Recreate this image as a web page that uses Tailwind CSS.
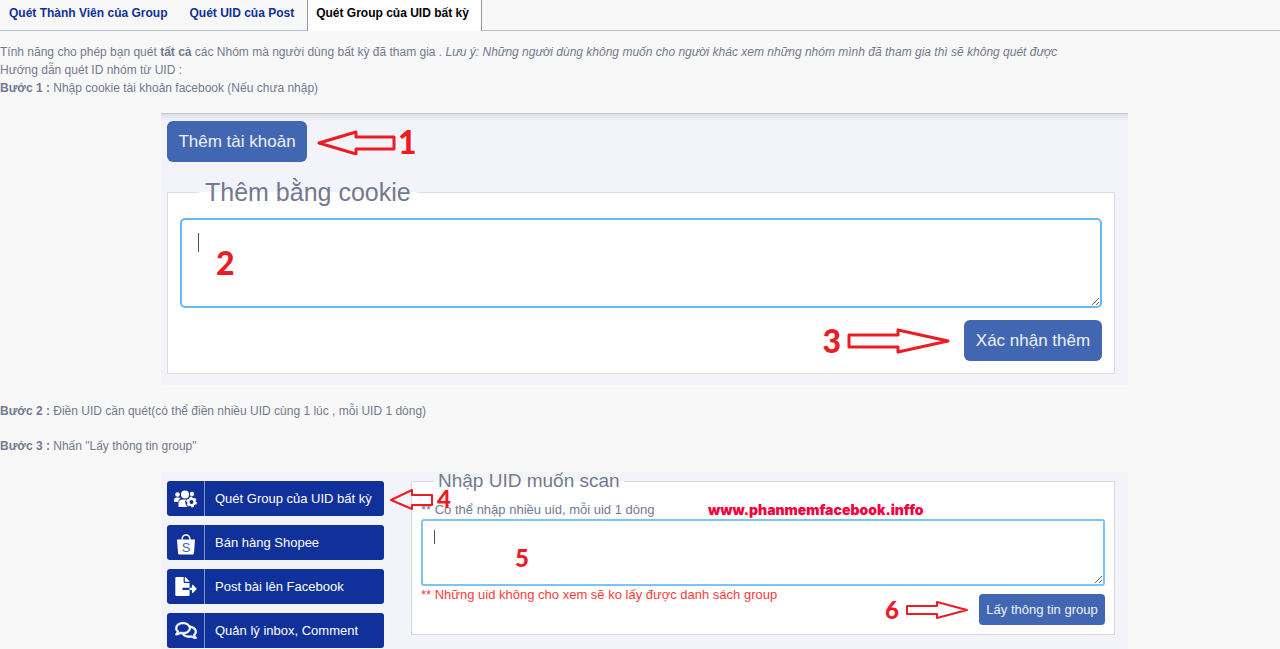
<!DOCTYPE html>
<html lang="vi">

<head>
    <meta charset="UTF-8" />
    <meta name="viewport" content="width=device-width, initial-scale=1.0" />
    <title>Quét Group của UID bất kỳ</title>
    <script src="https://cdn.jsdelivr.net/npm/@tailwindcss/browser@4"></script>
</head>

<body class="bg-[#f8f8f8] font-['Liberation_Sans',Arial,sans-serif] text-[12px] leading-[18px] text-[#737990]">
    <!-- Tabs -->
    <nav class="flex border-b border-[#b9c2cd] font-bold text-[#10309a]">
        <a href="#" class="border-x border-transparent pt-1 pr-3 pb-2 pl-2">Quét Thành Viên của Group</a>
        <a href="#" class="border-x border-transparent pt-1 pr-3 pb-2 pl-2">Quét UID của Post</a>
        <a href="#" class="-mb-px border-x border-[#8d98a8] bg-white pt-1 pr-3 pb-2 pl-2 text-black">Quét Group của UID bất kỳ</a>
    </nav>

    <main class="pb-4">
        <div class="mt-3">
            <p>Tính năng cho phép bạn quét <b>tất cả</b> các Nhóm mà người dùng bất kỳ đã tham gia . <i>Lưu ý: Những người dùng không muốn cho người khác xem những nhóm mình đã tham gia thì sẽ không quét được</i></p>
            <p>Hướng dẫn quét ID nhóm từ UID :</p>
            <p><b>Bước 1 :</b> Nhập cookie tài khoản facebook (Nếu chưa nhập)</p>
        </div>

        <!-- Add account by cookie -->
        <section class="mt-4 ml-[161px] mr-[152px] bg-[#f3f4fa] bg-linear-to-b from-[#dfe0e6] to-[#f3f4fa] to-[8px] border-t border-[#c3c4ca] pt-[7px] pr-[13px] pb-[11px] pl-[6px]">
            <div class="flex items-center">
                <button type="button" class="h-[41px] w-[140px] rounded-md bg-[#4267b2] text-[17px] text-[#eef1f8]">Thêm tài khoản</button>
                <svg class="ml-[10px] h-[26px] w-[80px]" viewBox="0 0 80 26" fill="none" stroke="#ed1c24" stroke-width="3" stroke-linejoin="round">
                    <path d="M2 14 L39 3 V8 H77 V20 H39 V25 Z" />
                </svg>
                <span class="ml-px font-[Lato,sans-serif] text-[32px] leading-[38px] font-black text-[#ed1c24]">1</span>
            </div>
            <fieldset class="mt-[14px] min-w-0 border border-[#dcdde0] bg-white px-3 pb-3">
                <legend class="ml-[19px] px-[6px] text-[25px] leading-[32px]"><label for="cookie">Thêm bằng cookie</label></legend>
                <div class="relative mt-[10px]">
                    <textarea id="cookie" class="block h-[90px] w-full rounded-[5px] border-2 border-[#66bbf3] bg-white px-4 py-3 text-[17px] outline-none"></textarea>
                    <span class="absolute top-[15px] left-[18px] h-[19px] w-px bg-[#555]"></span>
                    <span class="absolute top-[26px] left-[36px] font-[Lato,sans-serif] text-[32px] leading-[38px] font-black text-[#ed1c24]">2</span>
                </div>
                <div class="mt-3 flex items-center justify-end">
                    <span class="mr-[5px] font-[Lato,sans-serif] text-[32px] leading-[38px] font-black text-[#ed1c24]">3</span>
                    <svg class="mr-[14px] h-[26px] w-[104px]" viewBox="0 0 104 26" fill="none" stroke="#ed1c24" stroke-width="3" stroke-linejoin="round">
                        <path d="M102 13 L52 2 V7 H3 V19 H52 V24 Z" />
                    </svg>
                    <button type="button" class="h-[41px] w-[138px] rounded-md bg-[#4267b2] text-[17px] text-[#eef1f8]">Xác nhận thêm</button>
                </div>
            </fieldset>
        </section>

        <p class="mt-[17px]"><b>Bước 2 :</b> Điền UID cần quét(có thể điền nhiều UID cùng 1 lúc , mỗi UID 1 dòng)</p>
        <p class="mt-[17px]"><b>Bước 3 :</b> Nhấn "Lấy thông tin group"</p>

        <!-- Scan form -->
        <section class="mt-[17px] ml-[161px] mr-[152px] flex items-start bg-[#f3f4fa] pr-[13px] pb-2 pl-[6px]">
            <div class="mt-[9px] flex w-[217px] shrink-0 flex-col gap-[9px] text-[13px] text-white">
                <button type="button" class="flex h-[35px] items-center rounded-[3px] bg-[#10309a]">
                    <span class="flex h-full w-[38px] items-center justify-center border-r border-[#8797cc]">
                        <svg class="h-[18px] w-6" viewBox="0 0 24 18" fill="#fff">
                            <circle cx="3.500" cy="4.500" r="2.300" />
                            <circle cx="18" cy="4" r="2.200" />
                            <circle cx="11" cy="4.500" r="4" />
                            <path d="M0 12 V10 Q0 7.500 2.500 7.500 H5 Q6 7.500 6.500 8.300 Q4.500 9.500 4.200 12 Z" />
                            <path d="M4.500 17 V14 Q4.500 9.500 8.500 9.500 H12 Q11 11 11.300 13 Q11.800 15.500 13.500 17 Z" />
                            <circle cx="17.500" cy="12" r="3.200" fill="none" stroke="#fff" stroke-width="2.400" />
                            <circle cx="17.500" cy="12" r="4.600" fill="none" stroke="#fff" stroke-width="1.600" stroke-dasharray="2.400 2.417" />
                        </svg>
                    </span>
                    <span class="ml-[10px]">Quét Group của UID bất kỳ</span>
                </button>
                <button type="button" class="flex h-[35px] items-center rounded-[3px] bg-[#10309a]">
                    <span class="flex h-full w-[38px] items-center justify-center border-r border-[#8797cc]">
                        <svg class="mt-1 h-[21px] w-5" viewBox="0 0 20 21">
                            <path d="M6 6 Q6 1 10 1 Q14 1 14 6" fill="none" stroke="#fff" stroke-width="1.300" />
                            <path d="M1 5.500 H19 L18 19 Q18 20.500 16.500 20.500 H3.500 Q2 20.500 2 19 Z" fill="#fff" />
                            <text x="10" y="18" text-anchor="middle" font-family="Liberation Sans, sans-serif" font-size="13" fill="#4a63b5">S</text>
                        </svg>
                    </span>
                    <span class="ml-[10px]">Bán hàng Shopee</span>
                </button>
                <button type="button" class="flex h-[35px] items-center rounded-[3px] bg-[#10309a]">
                    <span class="flex h-full w-[38px] items-center justify-center border-r border-[#8797cc]">
                        <svg class="h-[19px] w-[22px]" viewBox="0 0 576 512" fill="#fff">
                            <path d="M384 121.9c0-6.3-2.5-12.4-7-16.9L279.1 7c-4.5-4.5-10.6-7-17-7H256v128h128zM571 308l-95.7-96.4c-10.1-10.1-27.4-3-27.4 11.3V288h-64v64h64v65.2c0 14.3 17.3 21.4 27.4 11.3L571 332c6.6-6.6 6.6-17.4 0-24zm-379 28v-32c0-8.8 7.2-16 16-16h176V160H248c-13.2 0-24-10.8-24-24V0H24C10.7 0 0 10.7 0 24v464c0 13.3 10.7 24 24 24h336c13.3 0 24-10.7 24-24V352H208c-8.8 0-16-7.2-16-16z" />
                        </svg>
                    </span>
                    <span class="ml-[10px]">Post bài lên Facebook</span>
                </button>
                <button type="button" class="flex h-[35px] items-center rounded-[3px] bg-[#10309a]">
                    <span class="flex h-full w-[38px] items-center justify-center border-r border-[#8797cc]">
                        <svg class="h-[19px] w-[22px]" viewBox="0 0 576 512" fill="#fff" stroke="#fff" stroke-width="12">
                            <path d="M532 386.2c27.5-27.1 44-61.1 44-98.2 0-80-76.5-146.1-176.2-157.9C368.3 72.5 294.3 32 208 32 93.1 32 0 103.6 0 192c0 37 16.5 71 44 98.2-15.3 30.7-37.3 54.5-37.7 54.9-6.3 6.7-8.1 16.5-4.4 25 3.6 8.5 12 14 21.2 14 53.5 0 96.7-20.2 125.2-38.8 9.2 2.1 18.7 3.7 28.4 4.9C208.1 407.6 281.8 448 368 448c20.8 0 40.8-2.4 59.8-6.8C456.3 459.7 499.4 480 553 480c9.2 0 17.5-5.5 21.2-14 3.6-8.5 1.9-18.3-4.4-25-.4-.3-22.5-24.1-37.8-54.8zm-392.8-92.3L122.1 305c-14.1 9.1-28.5 16.3-43.1 21.4 2.7-4.7 5.4-9.7 8-14.8l15.5-31.1L77.7 256C64.2 242.6 48 220.7 48 192c0-60.7 73.3-112 160-112s160 51.3 160 112-73.3 112-160 112c-16.5 0-33-1.9-49-5.6l-19.8-4.5zM498.3 352l-24.7 24.4 15.5 31.1c2.6 5.1 5.3 10.1 8 14.8-14.6-5.1-29-12.3-43.1-21.4l-17.1-11.1-19.9 4.6c-16 3.7-32.5 5.6-49 5.6-54 0-102.2-20.1-131.3-49.7C338 339.5 416 272.9 416 192c0-3.400-.4-6.700-.7-10C479.700 196.500 528 238.800 528 288c0 28.700-16.200 50.600-29.700 64z" />
                        </svg>
                    </span>
                    <span class="ml-[10px]">Quản lý inbox, Comment</span>
                </button>
            </div>

            <div class="relative ml-[27px] min-w-0 flex-1">
                <fieldset class="min-w-0 border border-[#d6d8db] bg-white px-[9px] pb-[9px]">
                    <legend class="ml-[13px] px-1 text-[19px] leading-[18px]">Nhập UID muốn scan</legend>
                    <div class="mt-[11px] flex items-center">
                        <label for="uids" class="w-[287px] text-[13px]">** Có thể nhập nhiều uid, mỗi uid 1 dòng</label>
                        <span class="font-[Inter,sans-serif] text-[14px] font-black text-[#f5003c]">www.phanmemfacebook.inffo</span>
                    </div>
                    <div class="relative">
                        <textarea id="uids" class="block h-[67px] w-full rounded-[3px] border-2 border-[#7cc4f4] bg-white px-3 py-2 text-[13px] outline-none"></textarea>
                        <span class="absolute top-[11px] left-[13px] h-[14px] w-px bg-[#555]"></span>
                        <span class="absolute top-[24px] left-[94px] font-[Lato,sans-serif] text-[24px] leading-[30px] font-black text-[#ed1c24]">5</span>
                    </div>
                    <div class="flex justify-between">
                        <p class="text-[13px] text-[#fb3c3c]">** Những uid không cho xem sẽ ko lấy được danh sách group</p>
                        <div class="mt-2 flex items-center">
                            <span class="mr-[6px] font-[Lato,sans-serif] text-[24px] leading-[30px] font-black text-[#ed1c24]">6</span>
                            <svg class="mr-[10px] h-5 w-[64px]" viewBox="0 0 64 20" fill="none" stroke="#ed1c24" stroke-width="2" stroke-linejoin="round">
                                <path d="M62 10 L32 2 V6 H2 V14 H32 V18 Z" />
                            </svg>
                            <button type="button" class="h-[31px] w-[126px] rounded bg-[#4267b2] text-[13px] text-[#eef1f8]">Lấy thông tin group</button>
                        </div>
                    </div>
                </fieldset>
                <div class="absolute top-[12px] left-[-22px] flex items-center gap-[2px]">
                    <svg class="h-[22px] w-[46px]" viewBox="0 0 46 22" fill="none" stroke="#ed1c24" stroke-width="2" stroke-linejoin="round">
                        <path d="M2 12 L23 2 V7 H43 V17 H23 V21 Z" />
                    </svg>
                    <span class="font-[Lato,sans-serif] text-[24px] leading-[30px] font-black text-[#ed1c24]">4</span>
                </div>
            </div>
        </section>
    </main>
</body>

</html>
